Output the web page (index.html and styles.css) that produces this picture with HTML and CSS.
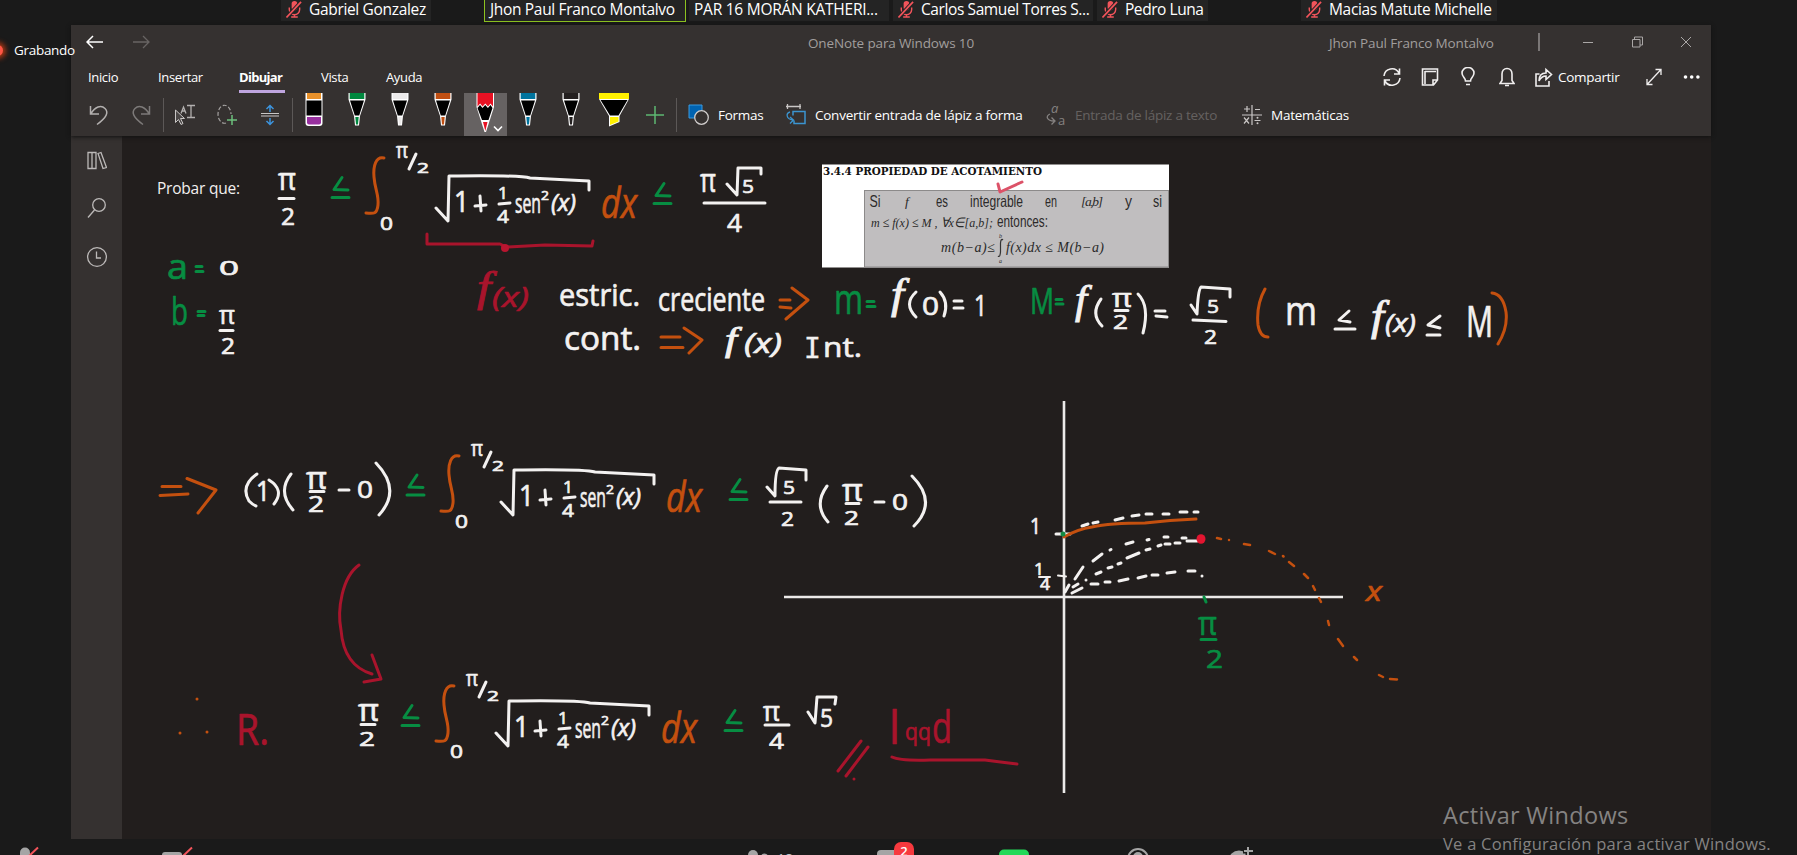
FILE: index.html
```html
<!DOCTYPE html>
<html lang="es">
<head>
<meta charset="utf-8">
<title>OneNote para Windows 10</title>
<link rel="stylesheet" href="styles.css">
</head>
<body>
<svg class="defs" width="0" height="0">
  <defs>
    <symbol id="mic" viewBox="0 0 16 18"><rect x="5.5" y="0" width="6" height="10" rx="3" fill="#f2545b"/><path d="M3 7v2a5.5 5.5 0 0 0 11 0V7M8.500 14v3M5 17h7" fill="none" stroke="#f2545b" stroke-width="1.500"/><path d="M0 17.500L15.500 1" stroke="#242424" stroke-width="4"/><path d="M0 17.500L15.500 1" stroke="#f2545b" stroke-width="1.800"/></symbol>
    <symbol id="pen" viewBox="0 0 18 34"><path d="M.5 0h17v6.500L12 23l-1 9.500H7L6 23 .5 6.500z" fill="#fff"/><path d="M2 7.500h14L11.200 22.500H6.800z" fill="#000"/><path d="M1.700 0h14.600v6H1.700zM7.300 24h3.400l-.7 7.500H8z" fill="currentColor"/></symbol>
    <g id="integral">
      <path class="ink orange" d="M384 158C376 156 373 166 374 177C375 190 379 195 378 205C377 214 374 214 366 213"/>
      <text class="hand" x="396" y="157.500" font-size="21" textLength="12" lengthAdjust="spacingAndGlyphs">π</text>
      <path class="ink white" d="M416 154L409 169"/>
      <text class="hand" x="417" y="172.500" font-size="15" textLength="12" lengthAdjust="spacingAndGlyphs">2</text>
      <text class="hand" x="380" y="230" font-size="18" textLength="13" lengthAdjust="spacingAndGlyphs">0</text>
    </g>
    <g id="integrand">
      <path class="ink white" d="M436 208L448 221L449 176Q520 175 530 178L589 181V190M475 206L486 205M480 196L481 211M499 204L510 203"/>
      <text class="hand" x="454" y="212" font-size="29" textLength="15" lengthAdjust="spacingAndGlyphs">1</text>
      <text class="hand" x="498" y="199" font-size="17" textLength="10" lengthAdjust="spacingAndGlyphs">1</text>
      <text class="hand" x="497" y="223" font-size="19" textLength="12" lengthAdjust="spacingAndGlyphs">4</text>
      <text class="hand" x="515" y="213" font-size="27" textLength="26" lengthAdjust="spacingAndGlyphs">sen</text>
      <text class="hand" x="541" y="200" font-size="13" textLength="8" lengthAdjust="spacingAndGlyphs">2</text>
      <text class="hand it" x="551" y="211" font-size="23" textLength="25" lengthAdjust="spacingAndGlyphs">(x)</text>
      <text class="hand it orange" x="601" y="218" font-size="42" textLength="36" lengthAdjust="spacingAndGlyphs">dx</text>
    </g>
    <path id="leq" class="ink green" d="M10 0L2 12L16 12.500M0 20H17"/>
  </defs>
</svg>

<div class="people">
  <div class="person gabriel"><svg class="mic"><use href="#mic"/></svg><span>Gabriel Gonzalez</span></div>
  <div class="person speaking">Jhon Paul Franco Montalvo</div>
  <div class="person par">PAR 16 MORÁN KATHERI...</div>
  <div class="person carlos"><svg class="mic"><use href="#mic"/></svg><span>Carlos Samuel Torres S...</span></div>
  <div class="person pedro"><svg class="mic"><use href="#mic"/></svg><span>Pedro Luna</span></div>
  <div class="person macias"><svg class="mic"><use href="#mic"/></svg><span>Macias Matute Michelle</span></div>
</div>

<div class="app">
  <header class="header">
    <div class="titlebar">
      <svg class="nav" width="64" height="16" viewBox="0 0 64 16"><path d="M17 8H1M7 2L1 8l6 6" stroke="#fff" stroke-width="1.500" fill="none"/><path d="M47 8h16M57 2l6 6-6 6" stroke="#686463" stroke-width="1.300" fill="none"/></svg>
      <span class="app-name">OneNote para Windows 10</span>
      <span class="user-name">Jhon Paul Franco Montalvo</span>
      <svg class="window-buttons" width="156" height="20" viewBox="0 0 156 20"><g fill="none" stroke="#aaa7a6"><path d="M1 1v18" stroke-width="1.200"/><path d="M45 10.500h10M94.500 7.500h7.500V15H94.500zM96.500 7V5h8v8H102M143 5l10 10M153 5l-10 10"/></g></svg>
    </div>
    <div class="tabs">
      <span class="tab inicio">Inicio</span><span class="tab insertar">Insertar</span><span class="tab active">Dibujar</span><span class="tab vista">Vista</span><span class="tab ayuda">Ayuda</span>
      <div class="actions">
        <svg width="20" height="20" viewBox="0 0 20 20"><path d="M2 9A8 8 0 0 1 17 6M18 11A8 8 0 0 1 3 14M17.500 1.500V7H12M2.500 18.500V13H8" class="line"/></svg>
        <svg width="18" height="20" viewBox="0 0 18 20"><path d="M1.500 2h15v11l-4 5h-11zM12 18v-5h4.500M4 4.500h11M4 4v13" class="line"/></svg>
        <svg width="14" height="20" viewBox="0 0 14 20"><path d="M4.500 14c0-3-3.500-4-3.500-8a6 5.500 0 0 1 12 0c0 4-3.500 5-3.500 8zM5 17.500h4" class="line"/></svg>
        <svg width="16" height="20" viewBox="0 0 16 20"><path d="M1 16.500h14l-2-3V7c0-3-2-5.500-5-5.500S3 4 3 7v6.500zM6 18.500h4" class="line"/></svg>
        <svg width="18" height="20" viewBox="0 0 18 20"><path d="M4.500 7H1v12h13v-5M4 14c0-5 2-8 7-8V2.500l5.500 5-5.500 5V9c-3 0-5 1-7 5z" class="line"/></svg>
        <span class="share">Compartir</span>
        <svg width="16" height="18" viewBox="0 0 16 18"><path d="M1 16.500L15 1.500M9.500 1.500H15V7M1 11v5.500h5.500" class="line thin"/></svg>
        <svg width="18" height="6" viewBox="0 0 18 6"><g fill="#fff"><circle cx="2.500" cy="3" r="1.800"/><circle cx="8.700" cy="3" r="1.800"/><circle cx="14.900" cy="3" r="1.800"/></g></svg>
      </div>
    </div>
    <div class="tools">
      <svg class="history" width="62" height="22" viewBox="0 0 62 22"><path d="M1.500 2v8H10M2 9.500C6 3 12 .5 16 4.500s1.500 9-8 16" fill="none" stroke="#b3b0af" stroke-width="1.500"/><path d="M60.500 2v8H52M60 9.500C56 3 50 .5 46 4.500s-1.500 9 8 16" fill="none" stroke="#7d7a79" stroke-width="1.500"/></svg>
      <i class="sep s1"></i>
      <svg class="select" width="22" height="22" viewBox="0 0 22 22"><path d="M1.500 6v12.500l3-3 2.500 5 2-1-2.500-5h4z" fill="#4b4746" stroke="#c9c6c5"/><path d="M7 9.500L9.500 3l2.500 6.500M8 7h3M13 1.500h8M13 13.500h8M17 1.500v12" fill="none" stroke="#b3b0af" stroke-width="1.300"/></svg>
      <svg class="lasso" width="22" height="22" viewBox="0 0 22 22"><path d="M10 19A6.500 9 0 1 1 15 10" fill="none" stroke="#a5a2a1" stroke-width="1.200" stroke-dasharray="4 2"/><path d="M16 11v10M11 16h10" stroke="#6cc07c" stroke-width="1.500"/></svg>
      <svg class="space" width="20" height="22" viewBox="0 0 20 22"><path d="M1 9.500h18M1 12h18" stroke="#c9c6c5" stroke-width="1.200"/><path d="M10 8V1.500M6.500 5L10 1.500 13.500 5M10 14v6.500M6.500 17l3.500 3.500 3.500-3.500" stroke="#3d94dd" stroke-width="1.500" fill="none"/></svg>
      <i class="sep s2"></i>
      <svg class="eraser" width="18" height="34" viewBox="0 0 18 34"><path d="M.5 0h17v30q0 3-3 3h-11q-3 0-3-3z" fill="#fff"/><path d="M2 0h14v6H2z" fill="#e8912b"/><path d="M1.500 7.500h15v15h-15z"/><path d="M2 24h14v5.500q0 2-2 2H4q-2 0-2-2z" fill="#98309f"/></svg>
      <svg class="pen p-green"><use href="#pen"/></svg>
      <svg class="pen p-white"><use href="#pen"/></svg>
      <svg class="pen p-orange"><use href="#pen"/></svg>
      <div class="selected"><svg width="43" height="43" viewBox="0 0 43 43"><path d="M12.500 0h17.500v14L22 39h-1.500L12.500 14z" fill="#fff"/><path d="M13.500 15l2.500-3 2.500 3 2.700-3 2.700 3 2.600-3 2 3-4 12h-6.500z"/><path d="M13.500 0h15.500v13.500l-2.500-3-2.500 3-2.700-3-2.700 3-2.500-3-2.600 3zM19 29h4.500l-2.200 9z" fill="#e81123"/><path d="M30 33.500l4 4 4-4" fill="none" stroke="#fff" stroke-width="1.600"/></svg></div>
      <svg class="pen p-blue"><use href="#pen"/></svg>
      <svg class="pen p-black"><use href="#pen"/></svg>
      <svg class="marker" width="30" height="34" viewBox="0 0 30 34"><path d="M0 0h30v6l-9.500 17v6L10 33.500V23L0 6z" fill="#fff"/><path d="M1.500 7h27l-9 15.500h-8.500z"/><path d="M0 0h30v6H0zM11 24h8.500v4.500L11 32z" fill="#fff100"/></svg>
      <svg class="plus" width="20" height="20" viewBox="0 0 20 20"><path d="M10 1v18M1 10h18" stroke="#5db872" stroke-width="1.500"/></svg>
      <i class="sep s3"></i>
      <svg class="shapes" width="22" height="22" viewBox="0 0 22 22"><path d="M1 1h13v13H1z" fill="#0063b1" stroke="#3b9be0"/><circle cx="13.500" cy="13.500" r="6.800" fill="#353130" stroke="#d0cdcc" stroke-width="1.300"/></svg>
      <span class="tool-label formas">Formas</span>
      <svg class="convert" width="22" height="22" viewBox="0 0 22 22"><path d="M1 2.500h15M2.500 0v5M15 0v5" stroke="#c9c6c5" stroke-width="1.300"/><path d="M12 7.500h8v12H9v-3M12 7.500H8v4" fill="none" stroke="#3b94cf" stroke-width="1.500"/><path d="M5 8c-4 1-4.500 7 3 8M5 13l3.500 3L5 19.500" fill="none" stroke="#3b94cf" stroke-width="1.300"/></svg>
      <span class="tool-label convertir">Convertir entrada de lápiz a forma</span>
      <svg class="ink-text" width="22" height="22" viewBox="0 0 22 22"><text x="5" y="9" class="icon-a it">a</text><text x="12" y="21" class="icon-a">a</text><path d="M4 10c-5 2-3 7 4 7M5.500 13.500L9 17l-3.500 3.500" fill="none" stroke="#858281" stroke-width="1.300"/></svg>
      <span class="tool-label entrada">Entrada de lápiz a texto</span>
      <svg class="math" width="22" height="22" viewBox="0 0 22 22"><path d="M11 1v20M1 11h20M3 5h6M6 2v6M14 5.500h5M3 13.500l5 6M8 13.500l-5 6M13.500 16.500h6" fill="none" stroke="#c9c6c5" stroke-width="1.200"/><circle cx="16.500" cy="13.700" r="1" fill="#c9c6c5"/><circle cx="16.500" cy="19.300" r="1" fill="#c9c6c5"/></svg>
      <span class="tool-label mate">Matemáticas</span>
    </div>
  </header>
  <div class="body">
    <nav class="side">
      <svg width="20" height="19" viewBox="0 0 20 19"><path d="M1 1.500h4v16H1zM5 1.500h4v16H5zM11 2.500l3-1 5.500 15-3.500 1z" class="side-line"/></svg>
      <svg width="20" height="22" viewBox="0 0 20 22"><circle cx="12" cy="8" r="6.300" class="side-line"/><path d="M7.500 13L1 20.500" class="side-line"/></svg>
      <svg width="22" height="22" viewBox="0 0 22 22"><circle cx="11" cy="11" r="9.400" class="side-line"/><path d="M10.500 5.500V12H15" class="side-line"/></svg>
    </nav>
    <svg class="page" viewBox="122 136 1589 703" width="1589" height="703">
      <text class="typed" x="157" y="194" font-size="15.500" textLength="83">Probar que:</text>

      <!-- pasted definition -->
      <g>
        <rect x="822" y="164.500" width="347" height="103" fill="#fff"/>
        <rect x="864.500" y="190.500" width="304" height="76.500" fill="#c0bebf" stroke="#8c8a8a"/>
        <text class="book" x="823" y="174.500" textLength="219" lengthAdjust="spacingAndGlyphs">3.4.4 PROPIEDAD DE ACOTAMIENTO</text>
        <g class="narrow">
          <text x="869.500" y="206.500" textLength="11" lengthAdjust="spacingAndGlyphs">Si</text>
          <text class="roman" x="905" y="206">f</text>
          <text x="936" y="206.500" textLength="12" lengthAdjust="spacingAndGlyphs">es</text>
          <text x="970" y="206.500" textLength="53" lengthAdjust="spacingAndGlyphs">integrable</text>
          <text x="1045" y="206.500" textLength="12" lengthAdjust="spacingAndGlyphs">en</text>
          <text class="roman" x="1081" y="206" textLength="22">[a,b]</text>
          <text x="1125" y="206.500" textLength="7" lengthAdjust="spacingAndGlyphs">y</text>
          <text x="1153" y="206.500" textLength="9" lengthAdjust="spacingAndGlyphs">si</text>
          <text class="roman" x="871" y="226.500" textLength="122" lengthAdjust="spacingAndGlyphs">m ≤ f(x) ≤ M , ∀x∈[a,b];</text>
          <text x="997" y="226.500" textLength="51" lengthAdjust="spacingAndGlyphs">entonces:</text>
          <text class="roman big" x="941" y="251.500" textLength="54">m(b−a)≤</text>
          <text class="roman big" x="1006" y="251.500" textLength="98">f(x)dx ≤ M(b−a)</text>
          <text class="roman tiny" x="999" y="238">b</text>
          <text class="roman tiny" x="999" y="263">a</text>
          <path d="M1003 240Q1001 238 1000.500 243V252Q1000 258 998 256" fill="none" stroke="#333" stroke-width="1.200"/>
        </g>
        <path class="ink" stroke="#dc5268" d="M998 184L1000 192L1022 182"/>
      </g>

      <!-- first statement -->
      <text class="hand" x="278" y="190" font-size="31" textLength="18" lengthAdjust="spacingAndGlyphs">π</text>
      <text class="hand" x="281" y="225" font-size="24" textLength="14" lengthAdjust="spacingAndGlyphs">2</text>
      <path class="ink white" d="M279 198.500H294"/>
      <use href="#leq" x="332" y="177.500"/>
      <use href="#integral"/>
      <use href="#integrand"/>
      <use href="#leq" x="654" y="183.500"/>
      <text class="hand" x="700" y="192" font-size="32" textLength="16" lengthAdjust="spacingAndGlyphs">π</text>
      <path class="ink white" d="M727 184L737 195L738 168H761V174M704 203H765"/>
      <text class="hand" x="742" y="192.500" font-size="19" textLength="12" lengthAdjust="spacingAndGlyphs">5</text>
      <text class="hand" x="727" y="232" font-size="25" textLength="15" lengthAdjust="spacingAndGlyphs">4</text>
      <path class="ink red" d="M427 234V244H500L506 247L545 245L592 246L593 241"/>
      <circle cx="505" cy="248" r="4" fill="#b8152f"/>
      <text class="cursive red" x="477" y="301" font-size="43" textLength="14" lengthAdjust="spacingAndGlyphs">f</text>
      <text class="hand it red" x="492" y="307" font-size="28" textLength="37" lengthAdjust="spacingAndGlyphs">(x)</text>
      <text class="hand" x="559" y="306" font-size="31" textLength="81" lengthAdjust="spacingAndGlyphs">estric.</text>
      <text class="hand" x="658" y="311" font-size="32" textLength="107" lengthAdjust="spacingAndGlyphs">creciente</text>
      <path class="ink orange" d="M780 300H790M780 307L791 308M792 288L808 300L786 319M661 337H680M661 347.500H683M684 328L702 340L689 353"/>
      <text class="hand" x="564" y="350" font-size="32" textLength="77" lengthAdjust="spacingAndGlyphs">cont.</text>
      <text class="cursive" x="725" y="351" font-size="34" textLength="12" lengthAdjust="spacingAndGlyphs">f</text>
      <text class="hand it" x="744" y="353" font-size="27" textLength="38" lengthAdjust="spacingAndGlyphs">(x)</text>
      <text class="slab" x="804" y="358" font-size="28">I</text>
      <text class="hand" x="823" y="357" font-size="28" textLength="39" lengthAdjust="spacingAndGlyphs">nt.</text>

      <text class="hand green" x="834" y="314" font-size="42" textLength="29" lengthAdjust="spacingAndGlyphs">m</text>
      <path class="ink green" d="M867 301.500H874M867 306.500H875M1056 299.500H1062M1056 304H1063"/>
      <text class="cursive" x="891" y="308" font-size="43" textLength="13" lengthAdjust="spacingAndGlyphs">f</text>
      <path class="ink white" d="M916 292Q903 304 916 317M940 292Q949 302 944 316M954 301H962M954 308H963"/>
      <text class="hand" x="922" y="315" font-size="25" textLength="17" lengthAdjust="spacingAndGlyphs">0</text>
      <text class="hand" x="974" y="316" font-size="29" textLength="13" lengthAdjust="spacingAndGlyphs">1</text>
      <text class="hand green" x="1030" y="314" font-size="37" textLength="24" lengthAdjust="spacingAndGlyphs">M</text>
      <text class="cursive" x="1075" y="313" font-size="40" textLength="12" lengthAdjust="spacingAndGlyphs">f</text>
      <path class="ink white" d="M1101 299Q1090 314 1102 326M1138 294Q1150 306 1143 333M1155 311H1165M1156 316L1167 317M1115 310.500H1128"/>
      <text class="hand" x="1112" y="307" font-size="25" textLength="20" lengthAdjust="spacingAndGlyphs">π</text>
      <text class="hand" x="1113" y="329" font-size="20" textLength="15" lengthAdjust="spacingAndGlyphs">2</text>
      <path class="ink white" d="M1191 305L1197 314Q1198 290 1201 287L1230 289V297M1193 320L1226 321.500"/>
      <text class="hand" x="1207" y="312.500" font-size="19" textLength="12" lengthAdjust="spacingAndGlyphs">5</text>
      <text class="hand" x="1204" y="344" font-size="20" textLength="13" lengthAdjust="spacingAndGlyphs">2</text>
      <path class="ink orange" d="M1265 289Q1256 305 1258 325Q1260 337 1268 337M1492 293Q1503 294 1506 312Q1508 328 1498 344"/>
      <text class="hand" x="1285" y="325" font-size="41" textLength="32" lengthAdjust="spacingAndGlyphs">m</text>
      <path class="ink white" d="M1349 311L1339 320L1350 322M1335 329H1355M1440 316L1428 325L1440 328M1427 335H1440"/>
      <text class="cursive" x="1371" y="330" font-size="42" textLength="13" lengthAdjust="spacingAndGlyphs">f</text>
      <text class="hand it" x="1385" y="332" font-size="26" textLength="31" lengthAdjust="spacingAndGlyphs">(x)</text>
      <text class="hand" x="1466" y="337" font-size="44" textLength="27" lengthAdjust="spacingAndGlyphs">M</text>

      <text class="hand green" x="167" y="279" font-size="34" textLength="21" lengthAdjust="spacingAndGlyphs">a</text>
      <text class="hand" x="219" y="275" font-size="20" textLength="20" lengthAdjust="spacingAndGlyphs">0</text>
      <text class="hand green" x="171" y="325" font-size="39" textLength="17" lengthAdjust="spacingAndGlyphs">b</text>
      <path class="ink green" d="M196 266.500H202M196 271.500H203M198 311.500H205M198 315.500H204"/>
      <text class="hand" x="219" y="324" font-size="26" textLength="16" lengthAdjust="spacingAndGlyphs">π</text>
      <text class="hand" x="221" y="354" font-size="21" textLength="14" lengthAdjust="spacingAndGlyphs">2</text>
      <path class="ink white" d="M220 330.500H233"/>

      <!-- substitution -->
      <path class="ink orange" d="M162 486.500H181M160 495.500L188 494M187 478.500L216 490L198 513"/>
      <path class="ink white" d="M257 474Q240 486 249 501Q253 505 256 506M269 480Q285 490 274 504M291 474Q277 492 293 510M310 491.500H324M339 490H349M376 463Q402 490 379 515"/>
      <text class="hand" x="256" y="501" font-size="27" textLength="14" lengthAdjust="spacingAndGlyphs">1</text>
      <text class="hand" x="306" y="489" font-size="31" textLength="21" lengthAdjust="spacingAndGlyphs">π</text>
      <text class="hand" x="308" y="512" font-size="21" textLength="16" lengthAdjust="spacingAndGlyphs">2</text>
      <text class="hand" x="357" y="498" font-size="24" textLength="16" lengthAdjust="spacingAndGlyphs">0</text>
      <use href="#leq" x="407" y="475"/>
      <use href="#integral" x="75" y="298"/>
      <use href="#integrand" x="65" y="294"/>
      <use href="#leq" x="730" y="479.500"/>
      <path class="ink white" d="M767 487L775 496Q775 470 779 468L806 470V480M770 502H801M827 486Q813 505 828 522M846 503.500H859M875 502H884M912 476Q938 502 914 526"/>
      <text class="hand" x="783" y="494" font-size="18" textLength="12" lengthAdjust="spacingAndGlyphs">5</text>
      <text class="hand" x="781" y="526" font-size="20" textLength="13" lengthAdjust="spacingAndGlyphs">2</text>
      <text class="hand" x="842" y="501" font-size="31" textLength="21" lengthAdjust="spacingAndGlyphs">π</text>
      <text class="hand" x="844" y="525" font-size="20" textLength="15" lengthAdjust="spacingAndGlyphs">2</text>
      <text class="hand" x="892" y="509.500" font-size="22" textLength="16" lengthAdjust="spacingAndGlyphs">0</text>

      <!-- conclusion -->
      <path class="ink red" d="M359 565C342 577 337 610 341 630C343 655 355 669 372 674M372 655L381 679L364 682"/>
      <path class="ink orange dot" d="M197 699v.1M180 733v.1M207 732v.1"/>
      <text class="hand red" x="236" y="745" font-size="44" textLength="33" lengthAdjust="spacingAndGlyphs">R.</text>
      <text class="hand" x="358" y="721" font-size="31" textLength="21" lengthAdjust="spacingAndGlyphs">π</text>
      <text class="hand" x="359" y="746" font-size="20" textLength="16" lengthAdjust="spacingAndGlyphs">2</text>
      <path class="ink white" d="M361 724.500H375M765 725H789M808 712L815 723L817 697H836L835 704"/>
      <use href="#leq" x="402" y="705.500"/>
      <use href="#integral" x="70" y="528"/>
      <use href="#integrand" x="60" y="525"/>
      <use href="#leq" x="725" y="710.500"/>
      <text class="hand" x="763" y="721" font-size="27" textLength="17" lengthAdjust="spacingAndGlyphs">π</text>
      <text class="hand" x="769" y="749" font-size="22" textLength="15" lengthAdjust="spacingAndGlyphs">4</text>
      <text class="hand" x="820" y="727" font-size="25" textLength="13" lengthAdjust="spacingAndGlyphs">5</text>
      <path class="ink red" d="M861 741L838 771M868 747L846 776M854 779v.1M892 757Q900 761 930 760H985Q1000 762 1017 764"/>
      <text class="hand red" x="889" y="744" font-size="46" textLength="11" lengthAdjust="spacingAndGlyphs">l</text>
      <text class="hand red" x="905" y="740" font-size="24" textLength="26" lengthAdjust="spacingAndGlyphs">qq</text>
      <text class="hand red" x="932" y="743" font-size="44" textLength="20" lengthAdjust="spacingAndGlyphs">d</text>

      <!-- graph -->
      <path d="M1064 401V793M784 597H1343" stroke="#eceae9" stroke-width="2.600"/>
      <path class="ink white" d="M1056 534H1070M1082 526l6-2M1093 523l5-1M1115 520l8-2M1132 516l7-1M1146 514h6M1163 514h6M1180 512h7M1194 512h4"/>
      <path class="ink white" d="M1075 579L1083 567M1093 561l9-7M1110 550l1-.5M1126 544l7-2M1147 540l2-.5M1164 537h4M1182 538h4"/>
      <path class="ink white" d="M1065 592l4-7M1073 587l5-3M1086 580v.1M1096 574l5-2M1108 568l4-1M1118 564l3-1M1127 558l12-5M1146 550l4-1M1158 546l3-1M1165 544h5M1175 543h5M1187 541h10"/>
      <path class="ink white" d="M1072 593l10-5M1091 584h7M1105 582h5M1119 581l9-2M1138 578l8-2M1152 575h6M1167 573l8-1M1188 571h7M1202 576v.1"/>
      <path class="ink orange" d="M1064 537Q1078 529 1092 527Q1110 523 1145 523Q1170 520 1196 519"/>
      <circle cx="1063" cy="534" r="2.500" fill="#138a43"/>
      <ellipse cx="1201" cy="539" rx="4.500" ry="4.800" fill="#e41530"/>
      <path class="ink orange dashes" d="M1217 538l4 1M1229 540v.1M1244 544l6 1M1269 551l6 3M1283 556l.5.5M1289 562l5 4M1304 574l4 4M1313 586l2 4M1319 598l2 4M1328 621l1 4M1338 639l5 7M1354 657l3 3M1379 675l4 2M1390 679l7 .5"/>
      <text class="hand" x="1030" y="534" font-size="22" textLength="11" lengthAdjust="spacingAndGlyphs">1</text>
      <text class="hand" x="1034" y="575" font-size="16" textLength="10" lengthAdjust="spacingAndGlyphs">1</text>
      <text class="hand" x="1040" y="590" font-size="16" textLength="10" lengthAdjust="spacingAndGlyphs">4</text>
      <path class="ink white thin-ink" d="M1039 577H1050M1058 575.500L1066 576.500"/>
      <path class="ink green" d="M1204 597l2 5M1201 639.500H1216"/>
      <text class="hand green" x="1198" y="635" font-size="33" textLength="19" lengthAdjust="spacingAndGlyphs">π</text>
      <text class="hand green" x="1206" y="668" font-size="26" textLength="17" lengthAdjust="spacingAndGlyphs">2</text>
      <text class="hand it orange" x="1366" y="601" font-size="27" textLength="16" lengthAdjust="spacingAndGlyphs">x</text>
    </svg>
  </div>
</div>

<svg class="meeting-bar" viewBox="0 839 1797 16" width="1797" height="16">
  <rect x="20" y="847.500" width="10" height="18" rx="5" fill="#a5a5a5"/><path d="M28 857L38 847.500M182 857L192 847.500" stroke="#f2545b" stroke-width="2"/>
  <rect x="162" y="852" width="20" height="14" rx="3" fill="#a5a5a5"/>
  <circle cx="753" cy="855" r="5" fill="#a5a5a5"/><circle cx="764.500" cy="857" r="3.500" fill="#a5a5a5"/><text x="777" y="864" font-size="14" fill="#b8c4cc" class="ui">18</text>
  <rect x="877" y="850" width="24" height="20" rx="4" fill="#a5a5a5"/>
  <rect x="999" y="849.500" width="30" height="20" rx="5" fill="#23d959"/>
  <circle cx="1138" cy="859" r="10" fill="none" stroke="#a5a5a5" stroke-width="2"/><circle cx="1138" cy="857" r="5" fill="#a5a5a5"/>
  <circle cx="1239" cy="861" r="10.500" fill="#a5a5a5"/><path d="M1248 846v9M1243 851h10" stroke="#1a1a1a" stroke-width="5"/><path d="M1248 847v8M1244 851h9" stroke="#a5a5a5" stroke-width="2"/>
</svg>
<span class="chat-badge">2</span>
<div class="recording"><i class="record-dot"></i><span>Grabando</span></div>
<div class="watermark"><p class="wm-title">Activar Windows</p><p class="wm-sub">Ve a Configuración para activar Windows.</p></div>
</body>
</html>
```
FILE: styles.css
```css
* { box-sizing: border-box; }
body {
  margin: 0;
  width: 1797px;
  height: 855px;
  overflow: hidden;
  position: relative;
  background: #1a1a1a;
  color: #fff;
  font-family: "Open Sans", "Noto Sans", sans-serif;
}
svg { display: block; flex: none; }
.defs { position: absolute; }

/* participants */
.people { display: flex; height: 25px; padding-left: 281px; }
.person {
  display: flex; align-items: center;
  height: 21px; padding: 0 0 2px 5px;
  background: #242424;
  font-size: 15.500px; line-height: 19px; letter-spacing: -.33px; white-space: nowrap;
}
.mic { width: 16px; height: 17px; margin-right: 7px; }
.gabriel { width: 150px; }
.speaking { width: 202px; margin-left: 53px; height: 22px; padding-bottom: 2px; border: 1px solid #8cc220; border-top: 0; }
.par { width: 200px; margin-left: 3px; letter-spacing: -.25px; }
.carlos { width: 200px; margin-left: 4px; letter-spacing: -.4px; }
.pedro { width: 111px; margin-left: 4px; letter-spacing: -.45px; }
.macias { width: 196px; margin-left: 93px; }

/* application window */
.app { width: 1640px; height: 814px; margin-left: 71px; background: #221e1d; }
.header { height: 111px; padding-top: 3px; background: #353130; box-shadow: 0 1px 4px #111; position: relative; }
.titlebar { display: flex; align-items: center; height: 30px; margin-bottom: 3px; padding-left: 15px; font-size: 13.500px; color: #a19e9d; white-space: nowrap; }
.nav { margin-top: -3px; }
.app-name { width: 167px; margin-left: 658px; letter-spacing: -.14px; }
.user-name { width: 167px; margin-left: 354px; letter-spacing: -.14px; }
.window-buttons { margin-left: 42px; margin-top: -2px; }

.tabs { display: flex; align-items: center; height: 32px; padding-left: 17px; font-size: 13px; letter-spacing: -.35px; white-space: nowrap; }
.tab { height: 32px; line-height: 32px; }
.inicio { width: 70px; }
.insertar { width: 81px; }
.active { width: 46px; margin-right: 36px; font-weight: 700; letter-spacing: -.7px; border-bottom: 3px solid #bfa5df; }
.vista { width: 65px; }
.ayuda { width: 40px; }
.actions { display: flex; align-items: center; gap: 20px; margin-left: 956px; }
.actions .share { width: 62px; margin-left: -15px; margin-right: 6px; font-size: 13.500px; letter-spacing: -.3px; }
.actions svg:nth-child(2) { margin-left: -1px; }
.actions svg:nth-child(3) { margin-left: 2px; }
.actions svg:nth-child(4) { margin-left: 4px; }
.actions svg:nth-child(8) { margin-left: 1px; }
.line { fill: none; stroke: #f0eeee; stroke-width: 1.600; }
.line.thin { stroke-width: 1.300; }

.tools { display: flex; align-items: flex-start; height: 43px; padding-left: 18px; white-space: nowrap; }
.tools > svg { margin-top: 11px; }
.sep { width: 1px; height: 34px; margin-top: 5px; background: #5c5857; }
.s1 { margin-left: 12px; }
.select { margin-left: 10px; }
.lasso { margin-left: 20px; }
.space { margin-left: 22px; }
.s2 { margin-left: 12px; }
.tools > .eraser { margin: 0 0 0 12px; }
.tools > .pen { width: 18px; height: 34px; margin: 0 0 0 25px; }
.p-green { color: #00883f; }
.p-white { color: #eceaea; }
.p-orange { color: #c14f12; }
.p-blue { color: #00749e; }
.p-black { color: #242020; }
.selected { width: 43px; height: 43px; margin-left: 12px; background: #666262; }
.tools > .p-blue { margin-left: 12px; }
.tools > .marker { margin: 0 0 0 19px; }
.tools > .plus { margin: 12px 0 0 16px; }
.s3 { margin-left: 11px; }
.shapes { margin-left: 11px; }
.tool-label { height: 43px; line-height: 44px; font-size: 13.500px; letter-spacing: -.25px; }
.formas { width: 58px; margin-left: 8px; }
.convert { margin-left: 9px; }
.convertir { width: 222px; margin-left: 8px; }
.ink-text { margin-left: 9px; overflow: visible; }
.icon-a { font: 13px "Open Sans", sans-serif; fill: #858281; }
.entrada { width: 156px; margin-left: 7px; color: #656160; }
.math { margin-left: 10px; }
.mate { margin-left: 8px; }

.body { display: flex; }
.side { display: flex; flex-direction: column; align-items: center; gap: 27px; width: 51px; height: 703px; padding-top: 15px; background: #353130; }
.side svg { margin-left: 1px; }
.side-line { fill: none; stroke: #bcb9b8; stroke-width: 1.300; }

/* note canvas */
.typed { font-family: "Open Sans", sans-serif; fill: #f2f0ef; }
.hand { font-family: "Open Sans", sans-serif; fill: #f3f1f0; stroke: #f3f1f0; stroke-width: .7; stroke-linejoin: round; }
.cursive { font-family: "Liberation Serif", serif; font-style: italic; fill: #f3f1f0; stroke: #f3f1f0; stroke-width: .9; }
.slab { font-family: "DejaVu Sans Mono", monospace; fill: #f3f1f0; stroke: #f3f1f0; stroke-width: .4; }
.it { font-style: italic; }
.ink { fill: none; stroke-width: 3; stroke-linecap: round; stroke-linejoin: round; }
.ink.white { stroke: #f3f1f0; }
.ink.green { stroke: #078d42; }
.ink.orange { stroke: #c4500f; }
.ink.red { stroke: #a9142c; }
.ink.dashes { stroke-width: 2.500; }
.ink.thin-ink { stroke-width: 2; }
text.green { fill: #078d42; stroke: #078d42; }
text.orange { fill: #c4500f; stroke: #c4500f; }
text.red { fill: #a9142c; stroke: #a9142c; }
.book { font: bold 10.500px "DejaVu Serif", serif; fill: #111; }
.narrow { font: 16.500px "Liberation Sans", sans-serif; fill: #2c2a2a; }
.roman { font: italic 13.500px "Liberation Serif", serif; fill: #2a2a2a; }
.roman.big { font-size: 14px; }
.roman.tiny { font-size: 6px; }
.ui { font-family: "Open Sans", sans-serif; }

/* overlays */
.chat-badge { position: absolute; left: 894px; top: 842px; width: 20px; height: 20px; border-radius: 7px; background: #f7393e; font-size: 13px; line-height: 18px; font-weight: 600; text-align: center; }
.recording { position: absolute; left: 0; top: 39px; display: flex; align-items: center; height: 22px; padding-left: 14px; font-size: 13.500px; letter-spacing: -.3px; }
.record-dot { position: absolute; left: -8px; width: 11px; height: 11px; border-radius: 50%; background: #ff5545; box-shadow: 0 0 5px 3px #a23413; }
.watermark { position: absolute; left: 1443px; top: 798px; color: #858382; white-space: nowrap; }
.watermark p { margin: 0; }
.wm-title { font-size: 23.500px; line-height: 34px; letter-spacing: .3px; }
.wm-sub { font-size: 16.500px; line-height: 24px; letter-spacing: .25px; }
```
